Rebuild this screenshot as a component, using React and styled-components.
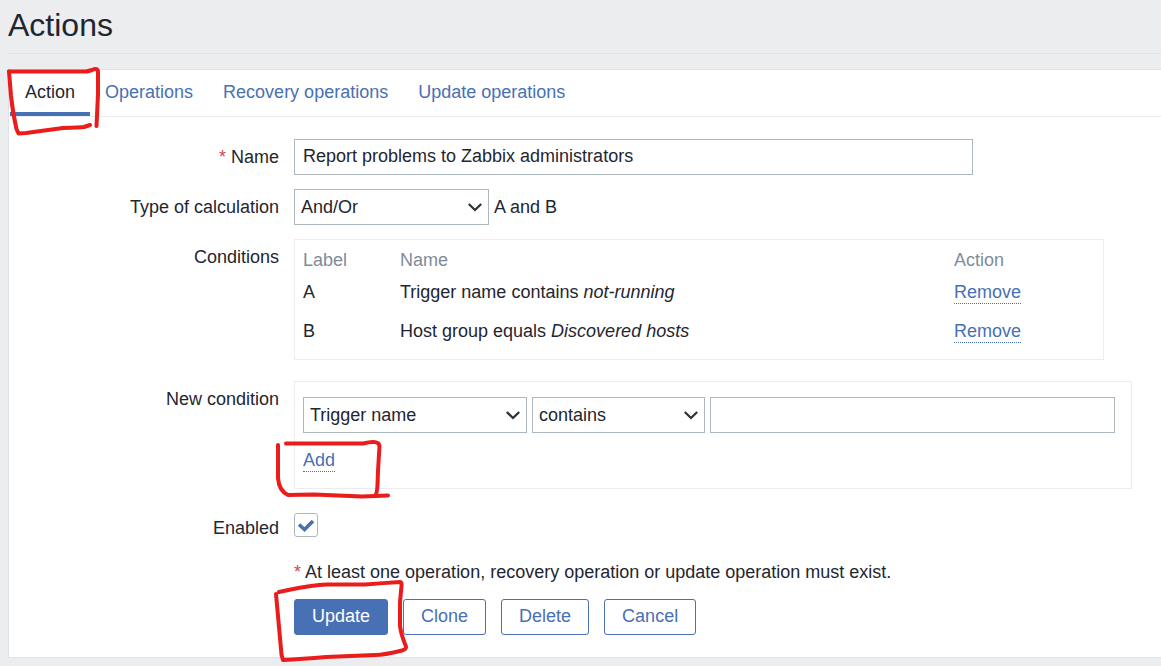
import React, { useState } from "react";
import styled, { createGlobalStyle, css } from "styled-components";

const color = {
  page: "#ecedef",
  text: "#1f2630",
  muted: "#808c9a",
  blue: "#4870b5",
  line: "#e0e3e5",
  soft: "#ebeced",
  field: "#adb7be",
  required: "#d0454c",
  marker: "#ea1c1c",
};

const GlobalStyle = createGlobalStyle`
  *, *::before, *::after { box-sizing: border-box; }
  body {
    margin: 0;
    background: ${color.page};
    color: ${color.text};
    font: 18px/24px "Liberation Sans", Arial, sans-serif;
  }
`;

const Page = styled.main`
  padding: 0 0 8px 8px;
`;

const Header = styled.header`
  padding: 5px 0 8px;
  margin-bottom: 15px;
  border-bottom: 1px solid ${color.line};
`;

const Title = styled.h1`
  margin: 0;
  font-size: 32px;
  line-height: 40px;
  font-weight: 400;
`;

const Panel = styled.section`
  background: #fff;
  border: 1px solid ${color.line};
  border-right: 0;
`;

const Tabs = styled.ul`
  display: flex;
  margin: 0;
  padding: 0 0 0 1px;
  list-style: none;
  border-bottom: 1px solid ${color.soft};
`;

const TabItem = styled.li`
  position: relative;
`;

const Tab = styled.a`
  display: block;
  padding: 10px 15px 8px;
  border-bottom: 4px solid ${(p) => (p.$active ? color.blue : "transparent")};
  color: ${(p) => (p.$active ? color.text : color.blue)};
  text-decoration: none;
`;

const Form = styled.form`
  display: grid;
  gap: 14px;
  padding: 22px 0;
`;

const Row = styled.div`
  display: grid;
  grid-template-columns: 270px minmax(0, 1fr);
  column-gap: 15px;
  padding-right: 29px;
`;

const labelStyle = css`
  line-height: 36px;
  text-align: right;
`;

const Label = styled.label`
  ${labelStyle}
`;

const GroupLabel = styled.span`
  ${labelStyle}
`;

const Field = styled.div`
  display: flex;
  align-items: center;
  gap: 5px;
`;

const Required = styled.span`
  color: ${color.required};
`;

const controlStyle = css`
  height: 36px;
  margin: 0;
  border: 1px solid ${color.field};
  border-radius: 0;
  background: #fff;
  color: ${color.text};
  font: inherit;
`;

const TextInput = styled.input`
  ${controlStyle}
  flex: 0 1 ${(p) => p.$width}px;
  min-width: 0;
  padding: 0 8px 2px;
`;

const SelectBox = styled.span`
  position: relative;
  flex: 0 0 ${(p) => p.$width}px;
  display: flex;
`;

const NativeSelect = styled.select`
  ${controlStyle}
  width: 100%;
  padding: 0 28px 0 6px;
  appearance: none;
`;

const Chevron = styled.svg`
  position: absolute;
  top: 14px;
  right: 7px;
  pointer-events: none;
`;

const Box = styled.div`
  max-width: ${(p) => p.$width}px;
  margin-bottom: 7px;
  padding: ${(p) => p.$padding};
  border: 1px solid ${color.soft};
`;

const Table = styled.table`
  width: 100%;
  table-layout: fixed;
  border-collapse: collapse;
`;

const HeadCell = styled.th`
  width: ${(p) => (p.$width ? `${p.$width}px` : "auto")};
  height: 24px;
  padding: 0;
  color: ${color.muted};
  font-weight: 400;
  text-align: left;
`;

const Cell = styled.td`
  height: 39px;
  padding: 0;
`;

const LinkButton = styled.button`
  display: block;
  margin: 0;
  padding: 0;
  border: 0;
  border-bottom: 1px dotted ${color.blue};
  background: none;
  color: ${color.blue};
  font: inherit;
  line-height: 22px;
  cursor: pointer;
`;

const RemoveButton = styled(LinkButton)`
  margin-top: 2px;
`;

const AddSlot = styled.div`
  position: relative;
  width: fit-content;
  margin-top: 16px;
`;

const CheckWrap = styled.span`
  position: relative;
  width: 24px;
  height: 24px;
  margin-top: 3px;
`;

const CheckInput = styled.input`
  display: block;
  width: 24px;
  height: 24px;
  margin: 0;
  appearance: none;
  border: 1px solid ${color.field};
  border-radius: 3px;
  background: #fff;

  &:not(:checked) + svg { display: none; }
`;

const CheckMark = styled.svg`
  position: absolute;
  inset: 0;
  pointer-events: none;
`;

const Note = styled.div`
  grid-column: 2;
  line-height: 25px;
`;

const Actions = styled.div`
  grid-column: 2;
  display: flex;
  flex-wrap: wrap;
  gap: 15px;
`;

const ButtonSlot = styled.span`
  position: relative;
`;

const Button = styled.button`
  height: 36px;
  margin: 0;
  padding: 0 17px 2px;
  border: 1px solid ${color.blue};
  border-radius: 3px;
  background: ${(p) => (p.$primary ? color.blue : "#fff")};
  color: ${(p) => (p.$primary ? "#fff" : color.blue)};
  font: inherit;
  cursor: pointer;
`;

const MarkerSvg = styled.svg`
  position: absolute;
  z-index: 1;
  left: ${(p) => p.$left}px;
  top: ${(p) => p.$top}px;
  pointer-events: none;
  fill: none;
  stroke: ${color.marker};
  stroke-width: 4;
  stroke-linecap: round;
  stroke-linejoin: round;
`;

function Marker({ left, top, width, height, paths }) {
  return (
    <MarkerSvg $left={left} $top={top} width={width} height={height} viewBox={`0 0 ${width} ${height}`} aria-hidden="true">
      {paths.map((d) => <path key={d} d={d} />)}
    </MarkerSvg>
  );
}

function Select({ width, options, ...rest }) {
  return (
    <SelectBox $width={width}>
      <NativeSelect {...rest}>
        {options.map((o) => <option key={o}>{o}</option>)}
      </NativeSelect>
      <Chevron width="14" height="9" viewBox="0 0 14 9" fill="none" stroke="#28343b" strokeWidth="2.3" aria-hidden="true">
        <path d="M0.800 1L7 7L13.200 1" />
      </Chevron>
    </SelectBox>
  );
}

const tabs = ["Action", "Operations", "Recovery operations", "Update operations"];

const conditions = [
  { label: "A", text: "Trigger name contains", value: "not-running" },
  { label: "B", text: "Host group equals", value: "Discovered hosts" },
];

export default function App() {
  const [enabled, setEnabled] = useState(true);
  return (
    <>
      <GlobalStyle />
      <Page>
        <Header>
          <Title>Actions</Title>
        </Header>
        <Panel>
          <Tabs>
            {tabs.map((name, i) => (
              <TabItem key={name}>
                <Tab href="#" $active={i === 0}>{name}</Tab>
                {i === 0 && (
                  <Marker left={-6} top={-6} width={104} height={76}
                    paths={["M5 7.500H82Q85 7 88 6Q94 3.500 94 8V30L92.500 62", "M5 7.500L7 32Q9 50 12.500 65L14.500 69.500L22 69L59 64Q76 63.500 80 63L86 61"]} />
                )}
              </TabItem>
            ))}
          </Tabs>
          <Form onSubmit={(e) => e.preventDefault()}>
            <Row>
              <Label htmlFor="name"><Required>*</Required> Name</Label>
              <Field>
                <TextInput id="name" $width={679} defaultValue="Report problems to Zabbix administrators" />
              </Field>
            </Row>
            <Row>
              <Label htmlFor="calculation">Type of calculation</Label>
              <Field>
                <Select id="calculation" width={195} options={["And/Or", "And", "Or"]} />
                <span>A and B</span>
              </Field>
            </Row>
            <Row>
              <GroupLabel id="conditions">Conditions</GroupLabel>
              <Box $width={810} $padding="8px 8px 9px">
                <Table aria-labelledby="conditions">
                  <thead>
                    <tr>
                      <HeadCell $width={97}>Label</HeadCell>
                      <HeadCell>Name</HeadCell>
                      <HeadCell $width={141}>Action</HeadCell>
                    </tr>
                  </thead>
                  <tbody>
                    {conditions.map((c) => (
                      <tr key={c.label}>
                        <Cell>{c.label}</Cell>
                        <Cell>{c.text} <em>{c.value}</em></Cell>
                        <Cell><RemoveButton type="button">Remove</RemoveButton></Cell>
                      </tr>
                    ))}
                  </tbody>
                </Table>
              </Box>
            </Row>
            <Row role="group" aria-labelledby="new-condition">
              <GroupLabel id="new-condition">New condition</GroupLabel>
              <Box $width={838} $padding="15px 16px 16px 8px">
                <Field>
                  <Select aria-label="Condition type" width={224} options={["Trigger name", "Host group"]} />
                  <Select aria-label="Operator" width={173} options={["contains", "equals"]} />
                  <TextInput aria-label="Value" $width={405} />
                </Field>
                <AddSlot>
                  <LinkButton type="button">Add</LinkButton>
                  <Marker left={-29} top={-12} width={118} height={64}
                    paths={["M4 8V41Q5 54 14 58L40 57.500L88 59.500L114 58.500", "M12 6.500H89Q105 2.500 105.500 9L104 34L103.500 48Q103 57 101 59"]} />
                </AddSlot>
              </Box>
            </Row>
            <Row>
              <Label htmlFor="enabled">Enabled</Label>
              <CheckWrap>
                <CheckInput id="enabled" type="checkbox" checked={enabled} onChange={(e) => setEnabled(e.target.checked)} />
                <CheckMark viewBox="0 0 24 24" fill="none" stroke={color.blue} strokeWidth="3.6" aria-hidden="true">
                  <path d="M5 11.500L10.500 16.500L19 8" />
                </CheckMark>
              </CheckWrap>
            </Row>
            <Row>
              <Note>
                <Required>*</Required> At least one operation, recovery operation or update operation must exist.
              </Note>
            </Row>
            <Row>
              <Actions>
                <ButtonSlot>
                  <Button type="submit" $primary>Update</Button>
                  <Marker left={-20} top={-20} width={136} height={86}
                    paths={["M5 13L12 11.500Q38 6 53 5.500H91Q110 4 126 3Q128 3 127.500 7L126 23V47Q127 55 131 65Q134 70 128 71.500Q110 76 101 76L52 78Q28 80 9 81Q7 76 7 70L2 15"]} />
                </ButtonSlot>
                <Button type="button">Clone</Button>
                <Button type="button">Delete</Button>
                <Button type="button">Cancel</Button>
              </Actions>
            </Row>
          </Form>
        </Panel>
      </Page>
    </>
  );
}
